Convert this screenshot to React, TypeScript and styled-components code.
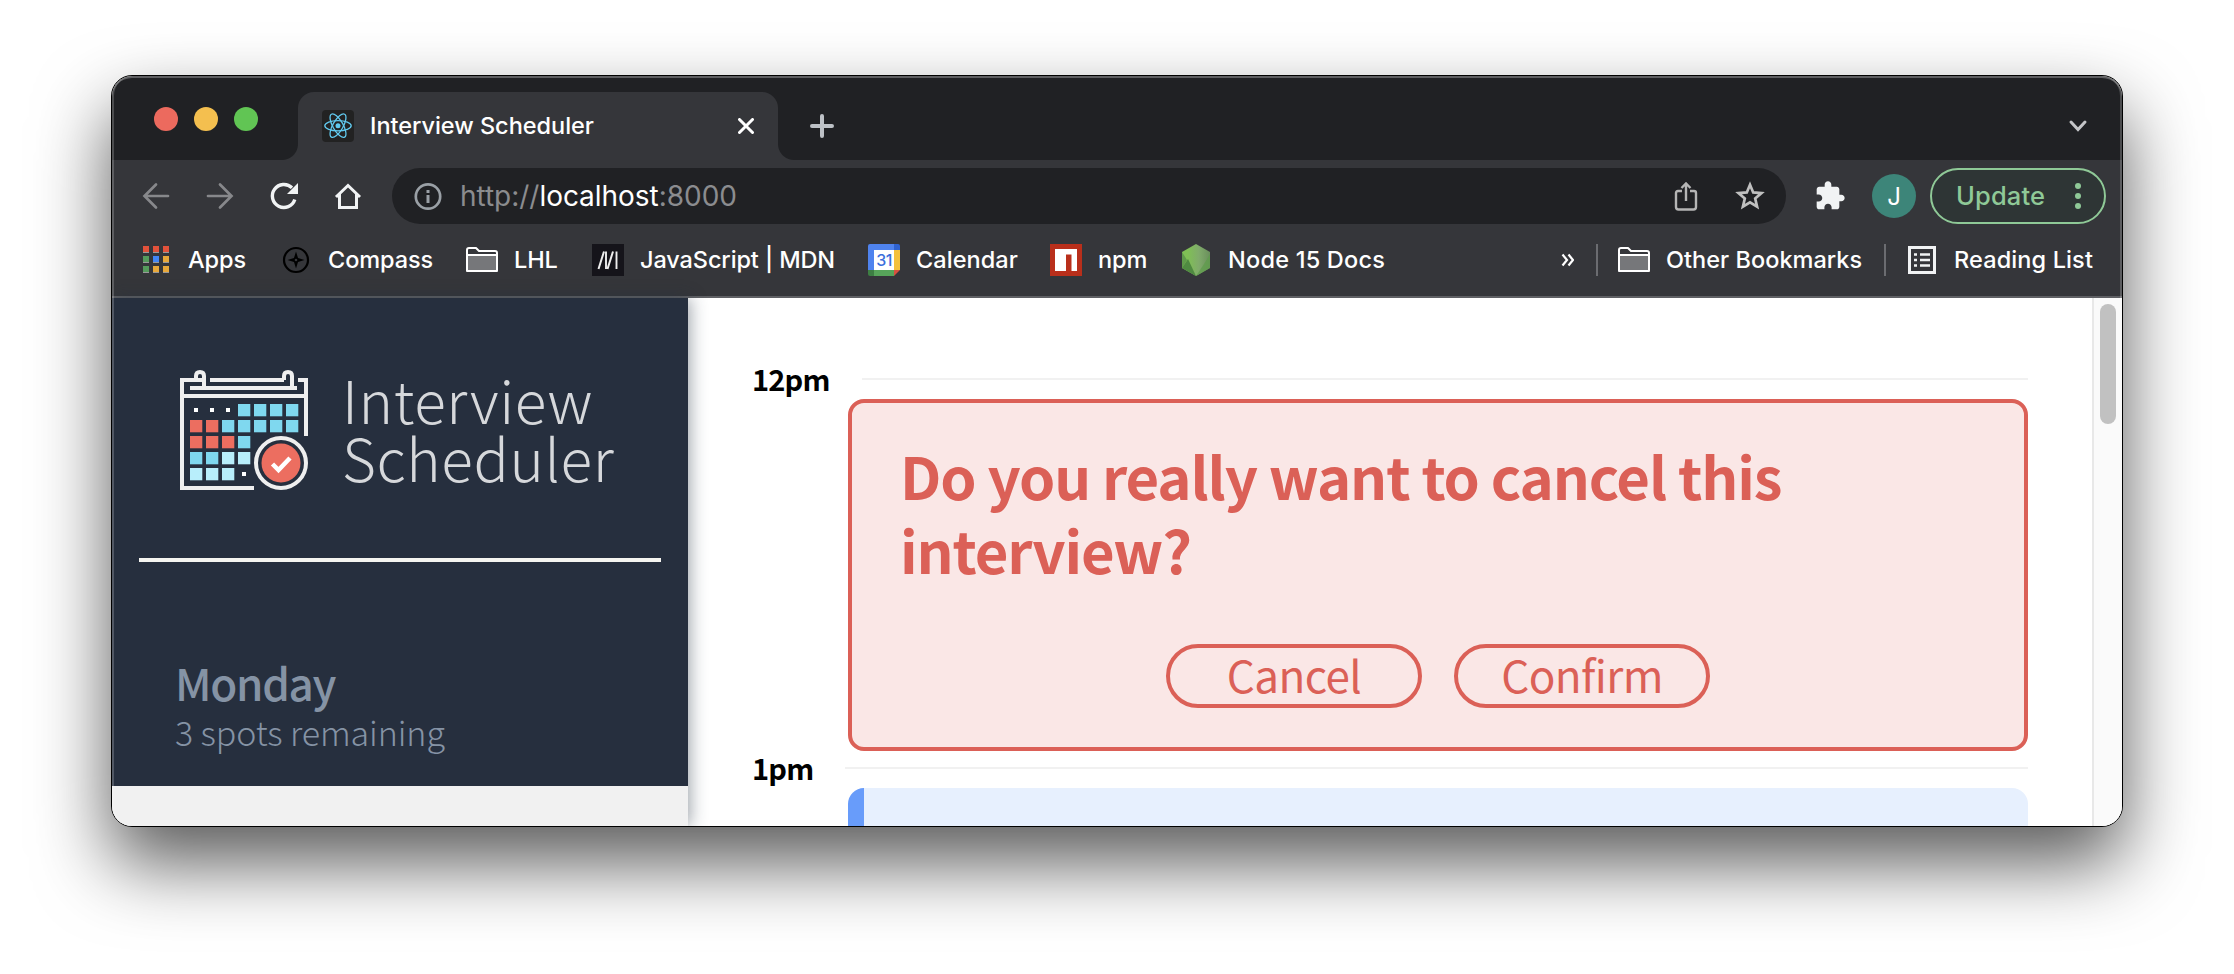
import React from 'react';
import styled, { createGlobalStyle } from 'styled-components';

const PAGE_FONT = `"Noto Sans CJK SC", "Noto Sans", sans-serif`;
const UI_FONT = `Inter, "Liberation Sans", sans-serif`;
const RED = '#db6057';

const GlobalStyle = createGlobalStyle`
  *, *::before, *::after { box-sizing: border-box; }
  body { margin: 0; background: #fff; font-family: ${PAGE_FONT}; overflow: hidden; }
  svg { display: block; flex: none; }
`;

const Desktop = styled.div`
  height: 974px;
  padding: 75px 111px 147px;
`;

const Window = styled.div`
  position: relative;
  display: flex;
  flex-direction: column;
  height: 752px;
  border: 1px solid #000;
  border-radius: 21px;
  overflow: hidden;
  background: #fff;
  box-shadow: 0 36px 74px rgba(0, 0, 0, 0.65);
`;

const WindowEdge = styled.div`
  position: absolute;
  inset: 0;
  border-radius: 20px;
  box-shadow: inset 0 2px 0 rgba(255, 255, 255, 0.28), inset 2px 0 0 rgba(255, 255, 255, 0.2),
    inset -2px 0 0 rgba(255, 255, 255, 0.2);
  pointer-events: none;
`;

const TabStrip = styled.div`
  display: flex;
  height: 84px;
  flex: none;
  padding: 16px 34px 0 42px;
  background: #202124;
`;

const Lights = styled.div`
  display: flex;
  gap: 16px;
  width: 144px;
  padding-top: 15px;
`;

const Light = styled.span<{ $color: string }>`
  width: 24px;
  height: 24px;
  border-radius: 50%;
  background: ${(p) => p.$color};
`;

const Tab = styled.div`
  position: relative;
  display: flex;
  align-items: center;
  width: 480px;
  height: 68px;
  padding: 0 24px;
  border-radius: 16px 16px 0 0;
  background: #35363a;
  &::before, &::after {
    content: '';
    position: absolute;
    bottom: 0;
    width: 16px;
    height: 16px;
  }
  &::before { left: -16px; background: radial-gradient(circle at 0 0, transparent 15.5px, #35363a 16.5px); }
  &::after { right: -16px; background: radial-gradient(circle at 100% 0, transparent 15.5px, #35363a 16.5px); }
`;

const TabTitle = styled.span`
  flex: 1;
  margin-left: 16px;
  font: 500 23.5px/32px ${UI_FONT};
  letter-spacing: -0.02px;
  color: #fff;
`;

const NewTab = styled.div`
  flex: 1;
  padding: 22px 0 0 32px;
`;

const TabSearch = styled.div`
  padding: 27px 0 0;
`;

const Toolbar = styled.div`
  display: flex;
  align-items: center;
  flex: none;
  height: 72px;
  padding: 0 16px 0 28px;
  background: #35363a;
`;

const NavButton = styled.div`
  width: 64px;
  height: 32px;
`;

const Omnibox = styled.div`
  display: flex;
  align-items: center;
  width: 1394px;
  height: 56px;
  margin-left: -4px;
  padding: 0 20px;
  border-radius: 28px;
  background: #202124;
`;

const Url = styled.span`
  flex: 1;
  margin-left: 16px;
  font: 400 28px/40px ${UI_FONT};
  letter-spacing: -0.03px;
  color: #8b8c8f;
  b { font-weight: 400; color: #fff; }
`;

const Star = styled.div`margin-left: 34px;`;

const Extensions = styled.div`margin-left: 28px;`;

const Avatar = styled.div`
  width: 44px;
  height: 44px;
  margin-left: 26px;
  border-radius: 50%;
  background: #3d8579;
  font: 400 24px/45px ${UI_FONT};
  text-align: center;
  color: #fff;
`;

const UpdateButton = styled.div`
  display: flex;
  align-items: center;
  justify-content: space-between;
  width: 176px;
  height: 56px;
  margin-left: 14px;
  padding: 0 23px 0 24px;
  border: 2px solid #8fc997;
  border-radius: 28px;
  background: #2e3535;
  font: 500 25.5px/40px ${UI_FONT};
  letter-spacing: 0.15px;
  color: #8fc997;
`;

const Bookmarks = styled.div`
  display: flex;
  align-items: center;
  flex: none;
  height: 66px;
  padding: 0 0 8px 28px;
  border-bottom: 2px solid #5f6064;
  background: #35363a;
`;

const Bookmark = styled.div<{ $width: number; $track?: number }>`
  display: flex;
  align-items: center;
  width: ${(p) => p.$width}px;
  gap: 16px;
  font: 500 23.5px/32px ${UI_FONT};
  letter-spacing: ${(p) => p.$track ?? -0.1}px;
  white-space: nowrap;
  color: #fff;
`;

const More = styled.div`
  width: 36px;
  margin-left: auto;
`;

const Divider = styled.div<{ $after: number }>`
  width: 2px;
  height: 32px;
  margin-right: ${(p) => p.$after}px;
  background: #6b6c70;
`;

const Page = styled.div`
  display: flex;
  flex: 1;
  min-height: 0;
`;

const Side = styled.aside`
  position: relative;
  width: 576px;
  background: #f1f1f1;
  box-shadow: 2px 0 16px rgba(34, 47, 62, 0.45);
`;

const SidePanel = styled.div`
  height: 488px;
  padding: 71px 27px 0;
  background: #262f3e;
`;

const Brand = styled.div`
  display: flex;
  height: 124px;
  padding-left: 41px;
`;

const BrandName = styled.div`
  padding: 1px 0 0 34px;
  font-size: 58.5px;
  font-weight: 200;
  line-height: 58px;
  letter-spacing: 0.6px;
  color: #d6d8db;
`;

const Rule = styled.hr`
  height: 4px;
  margin: 65px 0 0;
  border: 0;
  background: #f5f5f0;
`;

const Day = styled.div`
  padding: 89px 0 0 36px;
  color: #8593a5;
`;

const DayName = styled.div`
  font-size: 44px;
  font-weight: 500;
  line-height: 62px;
  letter-spacing: -1.3px;
`;

const Spots = styled.div`
  font-size: 34px;
  font-weight: 300;
  line-height: 38px;
  letter-spacing: -0.1px;
`;

const Schedule = styled.main`
  display: flex;
  flex-direction: column;
  flex: 1;
  padding: 59px 64px 0;
`;

const Hour = styled.div<{ $height: number }>`
  display: flex;
  align-items: flex-start;
  justify-content: space-between;
  flex: none;
  height: ${(p) => p.$height}px;
`;

const HourLabel = styled.h4<{ $line: number }>`
  margin: 0;
  font-size: 29px;
  font-weight: 700;
  line-height: ${(p) => p.$line}px;
  letter-spacing: -0.8px;
  color: #000;
`;

const HourLine = styled.div<{ $width: number; $top: number }>`
  width: ${(p) => p.$width}px;
  height: 2px;
  margin-top: ${(p) => p.$top}px;
  background: #f1f1f1;
`;

const ConfirmCard = styled.section`
  flex: none;
  width: 1180px;
  height: 352px;
  margin-left: auto;
  padding: 35px 48px 0;
  border: 4px solid ${RED};
  border-radius: 16px;
  background: #fae7e6;
  color: ${RED};
`;

const Question = styled.h1`
  margin: 0;
  font-size: 58px;
  font-weight: 600;
  line-height: 74px;
  letter-spacing: -1.15px;
`;

const Actions = styled.div`
  display: flex;
  justify-content: center;
  gap: 32px;
  margin-top: 58px;
`;

const Action = styled.div`
  width: 256px;
  height: 64px;
  border: 4px solid ${RED};
  border-radius: 32px;
  font-size: 44px;
  line-height: 52px;
  letter-spacing: -0.6px;
  text-align: center;
`;

const Appointment = styled.div`
  flex: none;
  width: 1180px;
  height: 200px;
  margin-left: auto;
  border-left: 16px solid #689cfa;
  border-radius: 16px;
  background: #e7f0fe;
`;

const ScrollTrack = styled.div`
  width: 30px;
  padding: 6px 6px 0;
  border-left: 2px solid #e8e8e8;
  background: #fafafa;
`;

const ScrollThumb = styled.div`
  width: 16px;
  height: 120px;
  border-radius: 8px;
  background: #c1c1c1;
`;

const ReactIcon = () => (
  <svg width="32" height="32" viewBox="0 0 32 32">
    <rect width="32" height="32" rx="4" fill="#222" />
    <g stroke="#61c9ee" strokeWidth="1.3" fill="none">
      {[0, 60, 120].map((a) => (
        <ellipse key={a} cx="16" cy="15.7" rx="13.2" ry="5.1" transform={`rotate(${a} 16 15.7)`} />
      ))}
    </g>
    <circle cx="16" cy="15.7" r="2.5" fill="#61c9ee" />
  </svg>
);

const Arrow = ({ flip }: { flip?: boolean }) => (
  <svg width="32" height="32" viewBox="0 0 32 32" fill="none" stroke="#87888b" strokeWidth="2.7" strokeLinecap="round" transform={flip ? 'scale(-1 1)' : undefined}>
    <path d="M28 16H5M16 4.500L4.500 16 16 27.500" />
  </svg>
);

const Folder = () => (
  <svg width="32" height="32" viewBox="0 0 32 32">
    <path d="M1 27V6Q1 4 3 4H10L13 7H29Q31 7 31 9V27Z" fill="#35363a" stroke="#fff" strokeWidth="2" strokeLinejoin="round" />
    <path d="M2 12H30V26H2Z" fill="#76777a" />
    <path d="M1 11H31" stroke="#fff" strokeWidth="2" />
  </svg>
);

const AppsIcon = () => {
  const colors = ['#e2523b', '#e2523b', '#e2523b', '#559b5c', '#4285f4', '#e8a83a', '#559b5c', '#e8a83a', '#e8a83a'];
  return (
    <svg width="32" height="32" viewBox="0 0 32 32">
      {colors.map((c, i) => (
        <g key={i} transform={`translate(${3 + (i % 3) * 10} ${2 + Math.floor(i / 3) * 10})`}>
          <rect width="6" height="7" fill="#999" />
          <rect width="6" height="6" fill={c} />
        </g>
      ))}
    </svg>
  );
};

const CompassIcon = () => (
  <svg width="32" height="32" viewBox="0 0 32 32">
    <circle cx="16" cy="16" r="12" fill="none" stroke="#000" strokeWidth="2.200" />
    <path d="M16 7.500L18 14 24.500 16 18 18 16 24.500 14 18 7.500 16 14 14Z" fill="#000" />
    <circle cx="16" cy="16" r="1.300" fill="#35363a" />
  </svg>
);

const MdnIcon = () => (
  <svg width="32" height="32" viewBox="0 0 32 32">
    <rect width="32" height="32" fill="#15141a" />
    <g stroke="#eee" strokeWidth="2" fill="none">
      <path d="M6.500 25L12 7.500M15.500 25L21 7.500" />
      <path d="M14 7.500V25M24.500 7.500V25" strokeWidth="1.900" />
    </g>
  </svg>
);

const CalendarGlyph = styled.text`
  font: 500 16px ${UI_FONT};
  letter-spacing: -0.6px;
`;

const CalendarIcon = () => (
  <svg width="32" height="32" viewBox="0 0 32 32">
    <path d="M2 0H26V6H6V26H0V2Q0 0 2 0Z" fill="#4f83ee" />
    <path d="M26 0H30Q32 0 32 2V6H26Z" fill="#2f62cf" />
    <path d="M26 6H32V26H26Z" fill="#f3c13c" />
    <path d="M6 26H26V32H6Z" fill="#57a55a" />
    <path d="M0 26H6V32H2Q0 32 0 30Z" fill="#3d7f43" />
    <path d="M26 26H32L26 32Z" fill="#d9503f" />
    <path d="M6 6H26V26H6Z" fill="#fff" />
    <CalendarGlyph x="16" y="22" textAnchor="middle" fill="#3b6fdc">31</CalendarGlyph>
  </svg>
);

const NpmIcon = () => (
  <svg width="32" height="32" viewBox="0 0 32 32">
    <rect width="32" height="32" fill="#b92f1b" />
    <path d="M5 5H27V27H21.500V10.500H16V27H5Z" fill="#fff" />
  </svg>
);

const NodeIcon = () => (
  <svg width="32" height="32" viewBox="0 0 32 32">
    <defs>
      <linearGradient id="node" x1="0" y1="0" x2="1" y2="0">
        <stop offset="0.2" stopColor="#7fbf55" />
        <stop offset="0.6" stopColor="#80ab6b" />
        <stop offset="1" stopColor="#6a8f5c" />
      </linearGradient>
    </defs>
    <path d="M16 0L30 8V24L16 32 2 24V8Z" fill="url(#node)" />
    <path d="M2 8V24L7 16Z" fill="#5f9a4a" />
    <path d="M2 24L8 15 16 32Z" fill="#4f8a41" />
    <path d="M30 10V24L16 32 24 20Z" fill="#5f9c4c" opacity="0.75" />
  </svg>
);

const ReadingIcon = () => (
  <svg width="32" height="32" viewBox="0 0 32 32" fill="none" stroke="#f1f3f4">
    <rect x="3.500" y="3.500" width="25" height="25" strokeWidth="3" />
    <path d="M8 10.500H11M8 16H11M8 21.500H11M14 10.500H24M14 16H24M14 21.500H24" strokeWidth="2.600" />
  </svg>
);

const cells: [number, number, string][] = [];
const B = '#7fd8ef';
const R = '#ec6e60';
const L = '#b8eefb';
const grid = ['...BBBB', 'RRBBBBB', 'RRRB', 'BBLL', 'LLL.'];
grid.forEach((row, r) =>
  row.split('').forEach((c, i) => cells.push([i, r, c])),
);

const LogoIcon = () => (
  <svg width="128" height="124" viewBox="0 0 128 124">
    <g fill="none" stroke="#efefef" strokeWidth="4">
      <path d="M14 11H2V119H74" />
      <path d="M30 11H104M118 11H126V67" />
      <path d="M2 27H126" />
      <path d="M10 19H117" />
      <path d="M2 11H24M16 11V7Q16 3 20 3Q24 3 24 7V19" />
      <path d="M104 11V7Q104 3 108 3Q112 3 112 7V19" />
    </g>
    {cells.map(([x, y, c]) =>
      c === '.' ? (
        <rect key={`${x}${y}`} x={14 + x * 16} y={39 + y * 16} width="4" height="4" fill="#fff" />
      ) : (
        <rect key={`${x}${y}`} x={10 + x * 16} y={35 + y * 16} width="12.300" height="12.300" fill={c === 'B' ? B : c === 'R' ? R : L} />
      ),
    )}
    <circle cx="101" cy="94" r="25" fill="#262f3e" stroke="#efefef" strokeWidth="4" />
    <circle cx="101" cy="94" r="19.500" fill={R} />
    <path d="M92.500 95L98.500 101 110 89" fill="none" stroke="#fff" strokeWidth="4.500" />
  </svg>
);

export default function App() {
  return (
    <>
      <GlobalStyle />
      <Desktop>
        <Window>
          <TabStrip>
            <Lights>
              <Light $color="#ec6a5e" />
              <Light $color="#f4bf4f" />
              <Light $color="#61c554" />
            </Lights>
            <Tab>
              <ReactIcon />
              <TabTitle>Interview Scheduler</TabTitle>
              <svg width="16" height="16" viewBox="0 0 16 16" stroke="#fff" strokeWidth="3" strokeLinecap="round">
                <path d="M1.500 1.500L14.500 14.500M14.500 1.500L1.500 14.500" />
              </svg>
            </Tab>
            <NewTab>
              <svg width="24" height="24" viewBox="0 0 24 24" stroke="#bdc1c6" strokeWidth="4" strokeLinecap="round">
                <path d="M12 2V22M2 12H22" />
              </svg>
            </NewTab>
            <TabSearch>
              <svg width="20" height="14" viewBox="0 0 20 14" fill="none" stroke="#c4c5c8" strokeWidth="3" strokeLinecap="round">
                <path d="M3 3L10 10.500 17 3" />
              </svg>
            </TabSearch>
          </TabStrip>

          <Toolbar>
            <NavButton><Arrow /></NavButton>
            <NavButton><Arrow flip /></NavButton>
            <NavButton>
              <svg width="32" height="32" viewBox="0 0 32 32">
                <path d="M26.800 19.500A11.500 11.500 0 1 1 24 7.800" fill="none" stroke="#f1f3f4" strokeWidth="3.400" />
                <path d="M30 3V14H19Z" fill="#f1f3f4" />
              </svg>
            </NavButton>
            <NavButton>
              <svg width="32" height="32" viewBox="0 0 32 32" fill="none" stroke="#f1f3f4" strokeWidth="3">
                <path d="M4 17L16 5.500 28 17M7.500 14V27.500H24.500V14" />
              </svg>
            </NavButton>
            <Omnibox>
              <svg width="32" height="32" viewBox="0 0 32 32" fill="none" stroke="#9aa0a6">
                <circle cx="16" cy="16.500" r="12.200" strokeWidth="2.700" />
                <path d="M16 15V23M16 10V13" strokeWidth="3" />
              </svg>
              <Url>http://<b>localhost</b>:8000</Url>
              <svg width="28" height="32" viewBox="0 0 28 32" fill="none" stroke="#b5b5b5" strokeWidth="2.400">
                <path d="M10 11H6Q4 11 4 13V27Q4 29.500 6.500 29.500H21.500Q24 29.500 24 27V13Q24 11 22 11H18M14 21V4M9.500 8L14 3.500 18.500 8" />
              </svg>
              <Star>
                <svg width="32" height="32" viewBox="0 0 32 32" fill="none" stroke="#c0c0c0" strokeWidth="2.700">
                  <path d="M16 4.800L19.200 12.400 27.500 13.100 21.200 18.500 23.100 26.600 16 22.300 8.900 26.600 10.800 18.500 4.500 13.100 12.800 12.400Z" />
                </svg>
              </Star>
            </Omnibox>
            <Extensions>
              <svg width="32" height="32" viewBox="0 0 24 24" fill="#f1f3f4">
                <path d="M20.500 11H19V7c0-1.100-.9-2-2-2h-4V3.500C13 2.120 11.880 1 10.500 1S8 2.120 8 3.500V5H4c-1.100 0-1.990.9-1.990 2v3.800H3.500c1.490 0 2.700 1.210 2.700 2.700s-1.210 2.700-2.700 2.700H2V20c0 1.100.9 2 2 2h3.800v-1.500c0-1.490 1.210-2.700 2.700-2.700 1.490 0 2.700 1.210 2.700 2.700V22H17c1.100 0 2-.9 2-2v-4h1.500c1.380 0 2.500-1.120 2.500-2.500S21.880 11 20.500 11z" />
              </svg>
            </Extensions>
            <Avatar>J</Avatar>
            <UpdateButton>
              Update
              <svg width="6" height="26" viewBox="0 0 6 26" fill="#8fc997">
                <circle cx="3" cy="3" r="3" />
                <circle cx="3" cy="13" r="3" />
                <circle cx="3" cy="23" r="3" />
              </svg>
            </UpdateButton>
          </Toolbar>

          <Bookmarks>
            <Bookmark $width={140}><AppsIcon />Apps</Bookmark>
            <Bookmark $width={186}><CompassIcon />Compass</Bookmark>
            <Bookmark $width={126}><Folder />LHL</Bookmark>
            <Bookmark $width={276}><MdnIcon />JavaScript | MDN</Bookmark>
            <Bookmark $width={182} $track={0.05}><CalendarIcon />Calendar</Bookmark>
            <Bookmark $width={130}><NpmIcon />npm</Bookmark>
            <Bookmark $width={240} $track={0.22}><NodeIcon />Node 15 Docs</Bookmark>
            <More>
              <svg width="14" height="14" viewBox="0 0 14 14" fill="none" stroke="#fff" strokeWidth="2.200">
                <path d="M2.500 1.500L7 7 2.500 12.500M8.500 1.500L13 7 8.500 12.500" />
              </svg>
            </More>
            <Divider $after={20} />
            <Bookmark $width={266} $track={0.03}><Folder />Other Bookmarks</Bookmark>
            <Divider $after={20} />
            <Bookmark $width={216} $track={0.12}><ReadingIcon />Reading List</Bookmark>
          </Bookmarks>

          <Page>
            <Side>
              <SidePanel>
                <Brand>
                  <LogoIcon />
                  <BrandName>Interview<br />Scheduler</BrandName>
                </Brand>
                <Rule />
                <Day>
                  <DayName>Monday</DayName>
                  <Spots>3 spots remaining</Spots>
                </Day>
              </SidePanel>
            </Side>
            <Schedule>
              <Hour $height={42}>
                <HourLabel $line={42}>12pm</HourLabel>
                <HourLine $width={1166} $top={21} />
              </Hour>
              <ConfirmCard>
                <Question>Do you really want to cancel this<br />interview?</Question>
                <Actions>
                  <Action>Cancel</Action>
                  <Action>Confirm</Action>
                </Actions>
              </ConfirmCard>
              <Hour $height={37}>
                <HourLabel $line={33}>1pm</HourLabel>
                <HourLine $width={1183} $top={16} />
              </Hour>
              <Appointment />
            </Schedule>
            <ScrollTrack><ScrollThumb /></ScrollTrack>
          </Page>
          <WindowEdge />
        </Window>
      </Desktop>
    </>
  );
}
